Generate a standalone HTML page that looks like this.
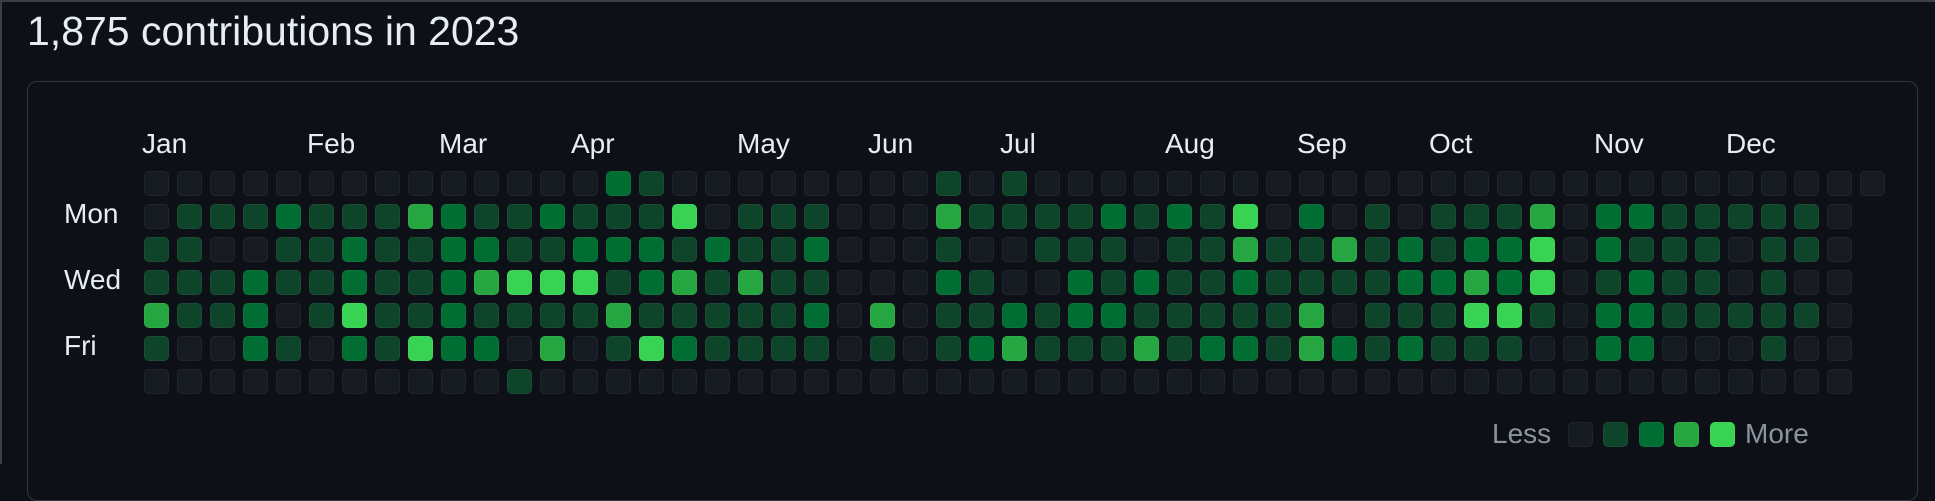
<!DOCTYPE html>
<html><head><meta charset="utf-8"><style>
html,body{margin:0;padding:0;background:#0d1117;}
body{width:1935px;height:464px;position:relative;overflow:hidden;font-family:"Liberation Sans",sans-serif;color:#e6edf3;border-top:2px solid #3a3f47;border-left:2px solid #3a3f47;box-sizing:border-box;}
.title{position:absolute;left:25px;top:4px;font-size:41px;line-height:50px;color:#e6edf3;}
.box{position:absolute;left:25px;top:79px;width:1891px;height:420px;border:1.5px solid #30363d;border-radius:10px;box-sizing:border-box;}
.lbl{position:absolute;font-size:28px;line-height:30px;color:#e6edf3;}
.c{position:absolute;width:25px;height:25px;border-radius:5px;box-sizing:border-box;border:1px solid rgba(255,255,255,0.05);}
.l0{background:#161b22}.l1{background:#0e4429}.l2{background:#006d32}.l3{background:#26a641}.l4{background:#39d353}
.leg{position:absolute;font-size:28px;line-height:30px;color:#8b949e;}
</style></head><body>
<div class="title">1,875 contributions in 2023</div>
<div class="box"></div>
<div class="lbl" style="left:140px;top:127px">Jan</div>
<div class="lbl" style="left:305px;top:127px">Feb</div>
<div class="lbl" style="left:437px;top:127px">Mar</div>
<div class="lbl" style="left:569px;top:127px">Apr</div>
<div class="lbl" style="left:735px;top:127px">May</div>
<div class="lbl" style="left:866px;top:127px">Jun</div>
<div class="lbl" style="left:998px;top:127px">Jul</div>
<div class="lbl" style="left:1163px;top:127px">Aug</div>
<div class="lbl" style="left:1295px;top:127px">Sep</div>
<div class="lbl" style="left:1427px;top:127px">Oct</div>
<div class="lbl" style="left:1592px;top:127px">Nov</div>
<div class="lbl" style="left:1724px;top:127px">Dec</div>
<div class="lbl" style="left:62px;top:197px">Mon</div>
<div class="lbl" style="left:62px;top:263px">Wed</div>
<div class="lbl" style="left:62px;top:329px">Fri</div>
<div id="g"></div>
<div class="leg" style="left:1490px;top:417px">Less</div>
<div class="c l0" style="left:1566px;top:420px"></div>
<div class="c l1" style="left:1601px;top:420px"></div>
<div class="c l2" style="left:1637px;top:420px"></div>
<div class="c l3" style="left:1672px;top:420px"></div>
<div class="c l4" style="left:1708px;top:420px"></div>
<div class="leg" style="left:1743px;top:417px">More</div>
<script>
var rows=[
"00000000000000210"+"0000000101"+"0000000000"+"000000000000000"+"0",
"01112111321121114"+"0111000311"+"1121214020"+"101113022111110"+"0",
"11001121122112221"+"2112000100"+"1110113113"+"121224021110110"+"0",
"11121121123444123"+"1311000210"+"0212112111"+"122324012110100"+"0",
"31120141121111311"+"1112030112"+"1221111130"+"111441022111110"+"0",
"10021021422030142"+"1111010123"+"1113122132"+"121110022000100"+"0",
"00000000000100000"+"0000000000"+"0000000000"+"000000000000000"+"0"
];
var g=document.getElementById('g'),h='';
for(var r=0;r<7;r++){var s=rows[r];for(var c=0;c<53;c++){if(c==52&&r>0)continue;var v=s.charAt(c)||'0';
h+='<div class="c l'+v+'" style="left:'+(142+c*33)+'px;top:'+(169+r*33)+'px"></div>';}}
g.innerHTML=h;
</script>
</body></html>
